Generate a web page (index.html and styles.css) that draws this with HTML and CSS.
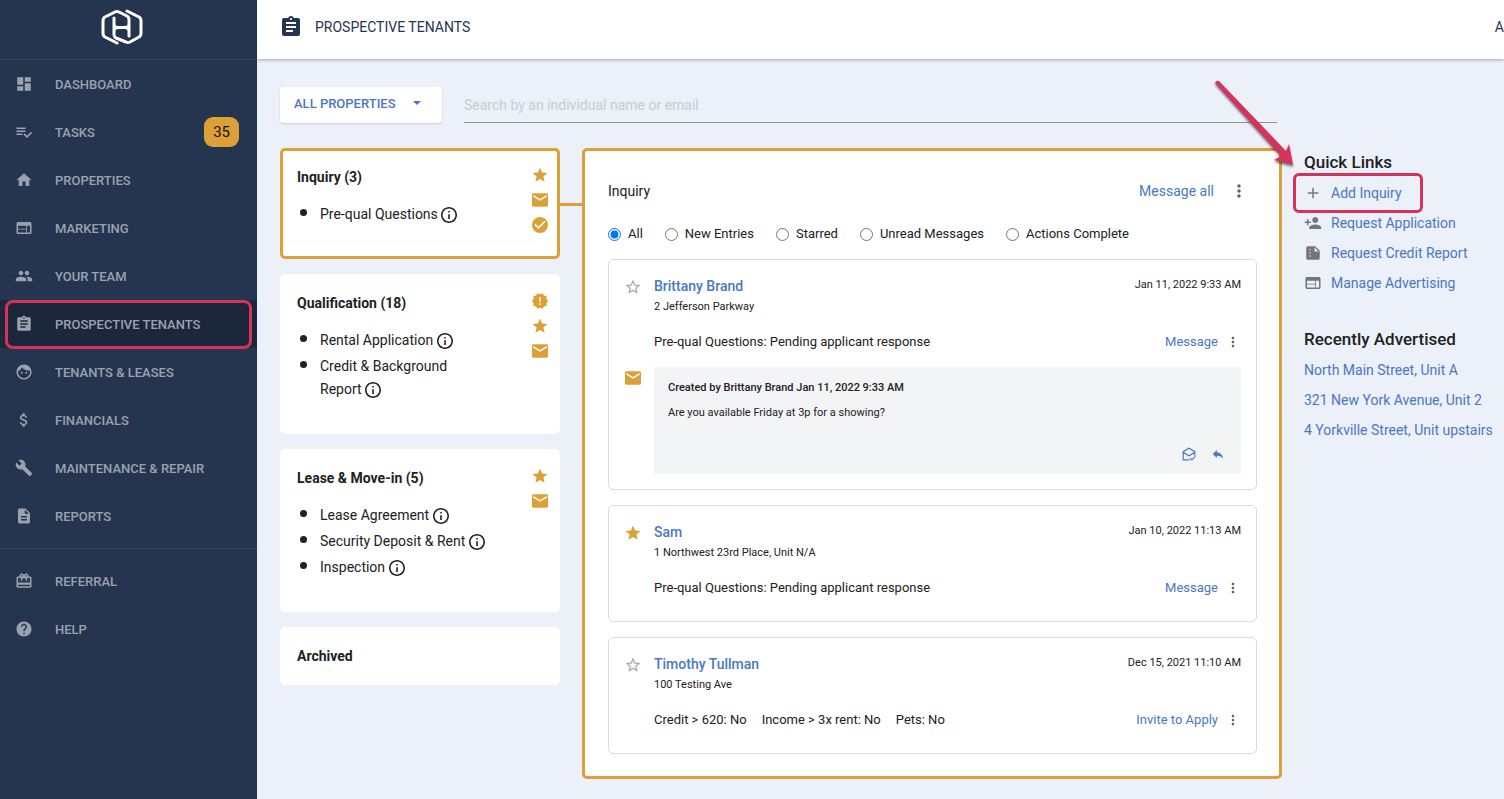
FILE: index.html
```html
<!DOCTYPE html>
<html lang="en">
<head>
  <meta charset="UTF-8">
  <meta name="viewport" content="width=device-width, initial-scale=1.0">
  <title>Prospective Tenants</title>
  <link rel="stylesheet" href="styles.css">
</head>
<body>
  <!-- Icon sprite -->
  <svg class="sprite" aria-hidden="true">
    <symbol id="i-dashboard" viewBox="0 0 24 24"><path d="M3 13h8V3H3v10zm0 8h8v-6H3v6zm10 0h8V11h-8v10zm0-18v6h8V3h-8z"/></symbol>
    <symbol id="i-tasks" viewBox="0 0 24 24"><path d="M14 10H2v2h12v-2zm0-4H2v2h12V6zM2 16h8v-2H2v2zm19.500-4.500L23 13l-7 7-4.500-4.500L13 14l3 3 5.500-5.500z"/></symbol>
    <symbol id="i-home" viewBox="0 0 24 24"><path d="M10 20v-6h4v6h5v-8h3L12 3 2 12h3v8z"/></symbol>
    <symbol id="i-web" viewBox="0 0 24 24"><path d="M20 4H4c-1.100 0-2 .9-2 2v12c0 1.100.9 2 2 2h16c1.100 0 2-.9 2-2V6c0-1.100-.9-2-2-2zm-5 14H4v-4h11v4zm0-5H4V9h11v4zm5 5h-4V9h4v9z"/></symbol>
    <symbol id="i-people" viewBox="0 0 24 24"><path d="M16 11c1.660 0 3-1.340 3-3s-1.340-3-3-3-3 1.340-3 3 1.340 3 3 3zm-8 0c1.660 0 3-1.340 3-3S9.660 5 8 5 5 6.340 5 8s1.340 3 3 3zm0 2c-2.330 0-7 1.170-7 3.500V19h14v-2.500C15 14.170 10.330 13 8 13zm8 0c-.29 0-.62.02-.97.05 1.160.84 1.970 1.970 1.970 3.450V19h6v-2.500c0-2.330-4.670-3.500-7-3.500z"/></symbol>
    <symbol id="i-assignment" viewBox="0 0 24 24"><path d="M19 3h-4.180C14.400 1.840 13.300 1 12 1s-2.400.84-2.820 2H5c-1.100 0-2 .9-2 2v14c0 1.100.9 2 2 2h14c1.100 0 2-.9 2-2V5c0-1.100-.9-2-2-2zm-7 0c.55 0 1 .45 1 1s-.45 1-1 1-1-.45-1-1 .45-1 1-1zm2 14H7v-2h7v2zm3-4H7v-2h10v2zm0-4H7V7h10v2z"/></symbol>
    <symbol id="i-face" viewBox="0 0 24 24"><path d="M9 11.750a1.250 1.250 0 1 0 0 2.500 1.250 1.250 0 0 0 0-2.500zm6 0a1.250 1.250 0 1 0 0 2.500 1.250 1.250 0 0 0 0-2.500zM12 2C6.480 2 2 6.480 2 12s4.480 10 10 10 10-4.480 10-10S17.520 2 12 2zm0 18c-4.410 0-8-3.590-8-8 0-.29.02-.58.05-.86 2.360-1.050 4.230-2.980 5.210-5.370C11.070 8.330 14.050 10 17.420 10c.78 0 1.530-.09 2.250-.26.21.71.33 1.470.33 2.260 0 4.410-3.590 8-8 8z"/></symbol>
    <symbol id="i-money" viewBox="0 0 24 24"><path d="M11.800 10.900c-2.270-.59-3-1.200-3-2.150 0-1.090 1.010-1.850 2.700-1.850 1.780 0 2.440.85 2.500 2.100h2.210c-.07-1.720-1.120-3.300-3.210-3.810V3h-3v2.160c-1.940.42-3.500 1.680-3.500 3.610 0 2.310 1.910 3.460 4.700 4.130 2.500.6 3 1.480 3 2.410 0 .69-.49 1.790-2.700 1.790-2.060 0-2.870-.92-2.980-2.100h-2.200c.12 2.190 1.760 3.420 3.680 3.830V21h3v-2.150c1.950-.37 3.500-1.500 3.500-3.550 0-2.840-2.430-3.810-4.700-4.400z"/></symbol>
    <symbol id="i-build" viewBox="0 0 24 24"><path d="M22.700 19l-9.100-9.100c.9-2.300.4-5-1.500-6.900-2-2-5-2.400-7.400-1.300L9 6 6 9 1.600 4.700C.4 7.100.9 10.100 2.900 12.100c1.900 1.900 4.600 2.400 6.900 1.500l9.100 9.100c.4.4 1 .4 1.400 0l2.300-2.300c.5-.4.5-1.100.1-1.400z"/></symbol>
    <symbol id="i-description" viewBox="0 0 24 24"><path d="M14 2H6c-1.100 0-2 .9-2 2v16c0 1.100.9 2 2 2h12c1.100 0 2-.9 2-2V8l-6-6zm2 16H8v-2h8v2zm0-4H8v-2h8v2zm-3-5V3.500L18.500 9H13z"/></symbol>
    <symbol id="i-gift" viewBox="0 0 24 24"><path d="M20 6h-2.180c.11-.31.18-.65.18-1 0-1.660-1.340-3-3-3-1.050 0-1.960.54-2.500 1.350l-.5.67-.5-.68C10.960 2.540 10.050 2 9 2 7.340 2 6 3.340 6 5c0 .35.07.69.18 1H4c-1.110 0-1.990.89-1.990 2L2 19c0 1.110.89 2 2 2h16c1.110 0 2-.89 2-2V8c0-1.110-.89-2-2-2zm-5-2c.55 0 1 .45 1 1s-.45 1-1 1-1-.45-1-1 .45-1 1-1zM9 4c.55 0 1 .45 1 1s-.45 1-1 1-1-.45-1-1 .45-1 1-1zm11 15H4v-2h16v2zm0-5H4V8h5.080L7 10.830 8.620 12 11 8.760l1-1.360 1 1.360L15.380 12 17 10.830 14.920 8H20v6z"/></symbol>
    <symbol id="i-help" viewBox="0 0 24 24"><path d="M12 2C6.480 2 2 6.480 2 12s4.480 10 10 10 10-4.480 10-10S17.520 2 12 2zm1 17h-2v-2h2v2zm2.070-7.750l-.9.92C13.450 12.900 13 13.500 13 15h-2v-.5c0-1.100.45-2.100 1.170-2.830l1.240-1.260c.37-.36.59-.86.59-1.410 0-1.100-.9-2-2-2s-2 .9-2 2H8c0-2.210 1.790-4 4-4s4 1.790 4 4c0 .88-.36 1.680-.93 2.250z"/></symbol>
    <symbol id="i-star" viewBox="0 0 24 24"><path d="M12 17.270L18.180 21l-1.640-7.030L22 9.240l-7.190-.61L12 2 9.190 8.630 2 9.240l5.460 4.730L5.820 21z"/></symbol>
    <symbol id="i-star-border" viewBox="0 0 24 24"><path d="M22 9.240l-7.190-.62L12 2 9.190 8.630 2 9.240l5.460 4.730L5.820 21 12 17.270 18.180 21l-1.630-7.030L22 9.240zM12 15.400l-3.760 2.270 1-4.280-3.320-2.880 4.380-.38L12 6.100l1.710 4.040 4.380.38-3.320 2.880 1 4.280L12 15.400z"/></symbol>
    <symbol id="i-email" viewBox="-1.500 -1.500 27 27"><path d="M22 2H2C.9 2 0 2.900 0 4v16c0 1.100.9 2 2 2h20c1.100 0 2-.9 2-2V4c0-1.100-.9-2-2-2zm0 5l-10 6L2 7V4.500l10 6 10-6V7z"/></symbol>
    <symbol id="i-check" viewBox="-1.500 -1.500 27 27"><path d="M12 0a12 12 0 1 0 0 24 12 12 0 0 0 0-24zm-2.400 18l-6-6 1.700-1.700 4.300 4.300 9.100-9.100L20.400 7.200z"/></symbol>
    <symbol id="i-alert" viewBox="0 0 24 24"><path d="M23 12l-2.440-2.780.34-3.680-3.610-.82-1.890-3.180L12 3 8.600 1.540 6.710 4.720l-3.610.81.34 3.680L1 12l2.440 2.780-.34 3.690 3.610.82 1.890 3.180L12 21l3.400 1.460 1.890-3.180 3.610-.82-.34-3.680L23 12zm-10 5h-2v-2h2v2zm0-4h-2V7h2v6z"/></symbol>
    <symbol id="i-info" viewBox="2 2 20 20"><path d="M11 17h2v-6h-2v6zm1-15C6.480 2 2 6.480 2 12s4.480 10 10 10 10-4.480 10-10S17.520 2 12 2zm0 18c-4.410 0-8-3.590-8-8s3.590-8 8-8 8 3.590 8 8-3.590 8-8 8zM11 9h2V7h-2v2z"/></symbol>
    <symbol id="i-more" viewBox="0 0 24 24"><path d="M12 8c1.100 0 2-.9 2-2s-.9-2-2-2-2 .9-2 2 .9 2 2 2zm0 2c-1.100 0-2 .9-2 2s.9 2 2 2 2-.9 2-2-.9-2-2-2zm0 6c-1.100 0-2 .9-2 2s.9 2 2 2 2-.9 2-2-.9-2-2-2z"/></symbol>
    <symbol id="i-add" viewBox="0 0 24 24"><path d="M19 13h-6v6h-2v-6H5v-2h6V5h2v6h6v2z"/></symbol>
    <symbol id="i-person-add" viewBox="0 0 24 24"><path d="M15 12c2.210 0 4-1.790 4-4s-1.790-4-4-4-4 1.790-4 4 1.790 4 4 4zm-9-2V7H4v3H1v2h3v3h2v-3h3v-2H6zm9 4c-2.670 0-8 1.340-8 4v2h16v-2c0-2.660-5.330-4-8-4z"/></symbol>
    <symbol id="i-report" viewBox="0 0 24 24"><path d="M15 3H5c-1.100 0-2 .9-2 2v14c0 1.100.9 2 2 2h14c1.100 0 2-.9 2-2V9l-6-6zM8 17c-.55 0-1-.45-1-1s.45-1 1-1 1 .45 1 1-.45 1-1 1zm0-4c-.55 0-1-.45-1-1s.45-1 1-1 1 .45 1 1-.45 1-1 1zm0-4c-.55 0-1-.45-1-1s.45-1 1-1 1 .45 1 1-.45 1-1 1zm6 1V4.500l5.500 5.500H14z"/></symbol>
    <symbol id="i-mail-read" viewBox="0 0 24 24"><path fill="none" stroke="currentColor" stroke-width="2" d="M13 22H2V8l10-6 10 6v7M2 9l10 6 10-6M14 19l3 3 6-6"/></symbol>
    <symbol id="i-reply" viewBox="0 0 24 24"><path d="M10 9V5l-7 7 7 7v-4.100c5 0 8.500 1.600 11 5.100-1-5-4-10-11-11z"/></symbol>
    <symbol id="i-caret" viewBox="0 0 24 24"><path d="M6 9l6 6 6-6z"/></symbol>
  </svg>

  <div class="app">
    <!-- Sidebar -->
    <aside class="sidebar">
      <a class="brand" href="#" aria-label="Home">
        <svg class="brand-logo" viewBox="0 0 42 36" fill="none" stroke="currentColor" stroke-width="3" stroke-linecap="round" stroke-linejoin="round">
          <path d="M16 34L4 28Q2 27 2 24V12Q2 9 4 8L14 3Q16 2 18 3L26 7Q28 8 28 11V27M13 9V25Q13 28 15 29L25 33Q27 34 29 33L38 28Q40 27 40 24V12Q40 9 38 8L26 2M13 16Q14 18.500 17 18.500H24Q27 18.500 28 16M13 21Q14 18.500 17 18.500M28 21Q27 18.500 24 18.500"/>
        </svg>
      </a>
      <nav>
        <ul class="nav-list">
          <li><a class="nav-link" href="#"><svg class="icon"><use href="#i-dashboard"/></svg>DASHBOARD</a></li>
          <li><a class="nav-link" href="#"><svg class="icon"><use href="#i-tasks"/></svg>TASKS<span class="nav-badge">35</span></a></li>
          <li><a class="nav-link" href="#"><svg class="icon"><use href="#i-home"/></svg>PROPERTIES</a></li>
          <li><a class="nav-link" href="#"><svg class="icon"><use href="#i-web"/></svg>MARKETING</a></li>
          <li><a class="nav-link" href="#"><svg class="icon"><use href="#i-people"/></svg>YOUR TEAM</a></li>
          <li><a class="nav-link active" href="#"><svg class="icon"><use href="#i-assignment"/></svg>PROSPECTIVE TENANTS</a></li>
          <li><a class="nav-link" href="#"><svg class="icon"><use href="#i-face"/></svg>TENANTS &amp; LEASES</a></li>
          <li><a class="nav-link" href="#"><svg class="icon"><use href="#i-money"/></svg>FINANCIALS</a></li>
          <li><a class="nav-link" href="#"><svg class="icon"><use href="#i-build"/></svg>MAINTENANCE &amp; REPAIR</a></li>
          <li><a class="nav-link" href="#"><svg class="icon"><use href="#i-description"/></svg>REPORTS</a></li>
        </ul>
        <ul class="nav-list nav-secondary">
          <li><a class="nav-link" href="#"><svg class="icon"><use href="#i-gift"/></svg>REFERRAL</a></li>
          <li><a class="nav-link" href="#"><svg class="icon"><use href="#i-help"/></svg>HELP</a></li>
        </ul>
      </nav>
    </aside>

    <div class="page">
      <header class="topbar">
        <svg class="topbar-icon"><use href="#i-assignment"/></svg>
        <h1 class="topbar-title">PROSPECTIVE TENANTS</h1>
        <span class="topbar-account">A</span>
      </header>

      <main class="content">
        <div class="toolbar">
          <div class="property-filter">
            <select class="property-select" aria-label="Properties">
              <option>ALL PROPERTIES</option>
            </select>
            <svg class="property-caret"><use href="#i-caret"/></svg>
          </div>
          <input class="search" type="text" placeholder="Search by an individual name or email" aria-label="Search">
        </div>

        <div class="board">
          <!-- Stages -->
          <div class="stages">
            <section class="stage selected">
              <div class="stage-body">
                <h2 class="stage-title">Inquiry (3)</h2>
                <ul class="stage-list">
                  <li><span>Pre-qual Questions&nbsp;<svg class="info"><use href="#i-info"/></svg></span></li>
                </ul>
              </div>
              <div class="stage-icons">
                <svg class="icon"><use href="#i-star"/></svg>
                <svg class="icon"><use href="#i-email"/></svg>
                <svg class="icon"><use href="#i-check"/></svg>
              </div>
            </section>

            <section class="stage">
              <div class="stage-body">
                <h2 class="stage-title">Qualification (18)</h2>
                <ul class="stage-list">
                  <li><span>Rental Application&nbsp;<svg class="info"><use href="#i-info"/></svg></span></li>
                  <li><span>Credit &amp; Background Report&nbsp;<svg class="info"><use href="#i-info"/></svg></span></li>
                </ul>
              </div>
              <div class="stage-icons">
                <svg class="icon"><use href="#i-alert"/></svg>
                <svg class="icon"><use href="#i-star"/></svg>
                <svg class="icon"><use href="#i-email"/></svg>
              </div>
            </section>

            <section class="stage">
              <div class="stage-body">
                <h2 class="stage-title">Lease &amp; Move-in (5)</h2>
                <ul class="stage-list">
                  <li><span>Lease Agreement&nbsp;<svg class="info"><use href="#i-info"/></svg></span></li>
                  <li><span>Security Deposit &amp; Rent&nbsp;<svg class="info"><use href="#i-info"/></svg></span></li>
                  <li><span>Inspection&nbsp;<svg class="info"><use href="#i-info"/></svg></span></li>
                </ul>
              </div>
              <div class="stage-icons">
                <svg class="icon"><use href="#i-star"/></svg>
                <svg class="icon"><use href="#i-email"/></svg>
              </div>
            </section>

            <section class="stage compact">
              <div class="stage-body">
                <h2 class="stage-title">Archived</h2>
              </div>
            </section>
          </div>

          <!-- Inquiry panel -->
          <section class="panel">
            <div class="panel-head">
              <h2 class="panel-title">Inquiry</h2>
              <a class="panel-action" href="#">Message all</a>
              <button class="icon-button large" type="button" aria-label="More"><svg><use href="#i-more"/></svg></button>
            </div>

            <div class="filters">
              <label class="filter"><input type="radio" name="filter" checked>All</label>
              <label class="filter"><input type="radio" name="filter">New Entries</label>
              <label class="filter"><input type="radio" name="filter">Starred</label>
              <label class="filter"><input type="radio" name="filter">Unread Messages</label>
              <label class="filter"><input type="radio" name="filter">Actions Complete</label>
            </div>

            <div class="entries">
              <article class="entry">
                <button class="star-button" type="button" aria-label="Star"><svg class="icon"><use href="#i-star-border"/></svg></button>
                <div class="entry-head">
                  <div>
                    <a class="entry-name" href="#">Brittany Brand</a>
                    <p class="entry-address">2 Jefferson Parkway</p>
                  </div>
                  <span class="entry-date">Jan 11, 2022 9:33 AM</span>
                </div>
                <div class="entry-detail">
                  <span>Pre-qual Questions: Pending applicant response</span>
                  <a class="entry-action" href="#">Message</a>
                  <button class="icon-button" type="button" aria-label="More"><svg><use href="#i-more"/></svg></button>
                </div>
                <svg class="icon note-icon"><use href="#i-email"/></svg>
                <div class="note">
                  <p class="note-meta">Created by Brittany Brand Jan 11, 2022 9:33 AM</p>
                  <p class="note-text">Are you available Friday at 3p for a showing?</p>
                  <div class="note-actions">
                    <button class="icon-button small" type="button" aria-label="Mark as read"><svg><use href="#i-mail-read"/></svg></button>
                    <button class="icon-button small" type="button" aria-label="Reply"><svg><use href="#i-reply"/></svg></button>
                  </div>
                </div>
              </article>

              <article class="entry">
                <button class="star-button on" type="button" aria-label="Unstar"><svg class="icon"><use href="#i-star"/></svg></button>
                <div class="entry-head">
                  <div>
                    <a class="entry-name" href="#">Sam</a>
                    <p class="entry-address">1 Northwest 23rd Place, Unit N/A</p>
                  </div>
                  <span class="entry-date">Jan 10, 2022 11:13 AM</span>
                </div>
                <div class="entry-detail">
                  <span>Pre-qual Questions: Pending applicant response</span>
                  <a class="entry-action" href="#">Message</a>
                  <button class="icon-button" type="button" aria-label="More"><svg><use href="#i-more"/></svg></button>
                </div>
              </article>

              <article class="entry">
                <button class="star-button" type="button" aria-label="Star"><svg class="icon"><use href="#i-star-border"/></svg></button>
                <div class="entry-head">
                  <div>
                    <a class="entry-name" href="#">Timothy Tullman</a>
                    <p class="entry-address">100 Testing Ave</p>
                  </div>
                  <span class="entry-date">Dec 15, 2021 11:10 AM</span>
                </div>
                <div class="entry-detail">
                  <span>Credit &gt; 620: No</span>
                  <span>Income &gt; 3x rent: No</span>
                  <span>Pets: No</span>
                  <a class="entry-action" href="#">Invite to Apply</a>
                  <button class="icon-button" type="button" aria-label="More"><svg><use href="#i-more"/></svg></button>
                </div>
              </article>
            </div>
          </section>

          <!-- Quick links -->
          <aside class="links">
            <h2 class="links-title">Quick Links</h2>
            <ul class="links-list">
              <li class="highlight"><a href="#"><svg class="icon"><use href="#i-add"/></svg>Add Inquiry</a></li>
              <li><a href="#"><svg class="icon"><use href="#i-person-add"/></svg>Request Application</a></li>
              <li><a href="#"><svg class="icon"><use href="#i-report"/></svg>Request Credit Report</a></li>
              <li><a href="#"><svg class="icon"><use href="#i-web"/></svg>Manage Advertising</a></li>
            </ul>
            <h2 class="links-title">Recently Advertised</h2>
            <ul class="links-list">
              <li><a href="#">North Main Street, Unit A</a></li>
              <li><a href="#">321 New York Avenue, Unit 2</a></li>
              <li><a href="#">4 Yorkville Street, Unit upstairs</a></li>
            </ul>
            <svg class="pointer" viewBox="0 0 84 92" aria-hidden="true">
              <path d="M2 5Q3 2 6 3L73 73L76 66L80 87L61 82L68 78Z"/>
            </svg>
          </aside>
        </div>
      </main>
    </div>
  </div>
</body>
</html>
```
FILE: styles.css
```css
* {
  box-sizing: border-box;
}

body {
  margin: 0;
  font-family: Roboto, "Liberation Sans", sans-serif;
  font-size: 14px;
  color: #212121;
  background: #ebf0f9;
  overflow-x: hidden;
}

h1, h2, p, ul {
  margin: 0;
  padding: 0;
}

ul {
  list-style: none;
}

a {
  color: #4a77c4;
  text-decoration: none;
}

button {
  padding: 0;
  border: none;
  background: none;
  cursor: pointer;
}

svg {
  display: block;
  fill: currentColor;
}

.sprite {
  display: none;
}

.icon {
  width: 18px;
  height: 18px;
  flex: none;
}

.app {
  display: flex;
  min-height: 100vh;
}

/* Sidebar */
.sidebar {
  width: 257px;
  flex: none;
  background: #253550;
}

.brand {
  display: flex;
  justify-content: center;
  align-items: center;
  height: 60px;
  padding: 0 14px 6px 0;
  border-bottom: 1px solid #31425f;
  color: #fff;
}

.brand-logo {
  width: 42px;
  height: 36px;
  fill: none;
}

.nav-link {
  display: flex;
  align-items: center;
  gap: 22px;
  height: 48px;
  padding: 0 18px 0 15px;
  font-size: 13px;
  font-weight: 500;
  color: #9ba2af;
}

.nav-link.active {
  position: relative;
  background: #1d273b;
}

.nav-link.active::after {
  content: '';
  position: absolute;
  inset: 0 5px -1px;
  border: 3px solid #d6335c;
  border-radius: 8px;
}

.nav-badge {
  margin-left: auto;
  padding: 0 9px;
  border-radius: 9px;
  background: #dda037;
  font-size: 15px;
  font-weight: 400;
  line-height: 30px;
  color: #111;
}

.nav-secondary {
  margin-top: 8px;
  padding-top: 8px;
  border-top: 1px solid #31425f;
}

/* Top bar */
.page {
  flex: 1;
  min-width: 0;
}

.topbar {
  display: flex;
  align-items: center;
  height: 59px;
  padding: 0 0 6px 22px;
  background: #fff;
  box-shadow: 0 1px 3px rgba(0, 0, 0, 0.3);
  color: #253550;
}

.topbar-icon {
  width: 24px;
  height: 24px;
}

.topbar-title {
  margin-left: 12px;
  font-size: 14px;
  font-weight: 400;
}

.topbar-account {
  margin-left: auto;
}

/* Toolbar */
.content {
  padding: 28px 0 21px 23px;
}

.toolbar {
  display: flex;
  gap: 22px;
  margin: 0 227px 25px 0;
}

.property-filter {
  position: relative;
  width: 162px;
}

.property-select {
  appearance: none;
  width: 100%;
  height: 36px;
  padding: 0 14px 4px;
  border: none;
  border-radius: 3px;
  background: #fff;
  box-shadow: 0 1px 2px rgba(0, 0, 0, 0.15);
  font-family: inherit;
  font-size: 13px;
  font-weight: 500;
  color: #4a77c4;
}

.property-caret {
  position: absolute;
  top: 8px;
  right: 17px;
  width: 16px;
  height: 16px;
  color: #4a77c4;
  pointer-events: none;
}

.search {
  flex: 1;
  height: 36px;
  padding: 0;
  border: none;
  border-bottom: 1px solid #949494;
  background: none;
  font-family: inherit;
  font-size: 14px;
}

.search::placeholder {
  color: #c9cbcf;
}

/* Board */
.board {
  display: grid;
  grid-template-columns: 280px minmax(0, 1fr) 200px;
  gap: 22px;
  align-items: start;
}

.stages {
  display: grid;
  gap: 15px;
}

.stage {
  position: relative;
  display: flex;
  justify-content: space-between;
  padding: 15px 8px 0 14px;
  border: 3px solid #fff;
  border-radius: 5px;
  background: #fff;
}

.stage.selected {
  border-color: #dda037;
}

/* line that joins the selected stage to the panel */
.stage.selected::after {
  content: '';
  position: absolute;
  top: 52px;
  left: 100%;
  width: 26px;
  height: 3px;
  background: #dda037;
}

.stage-body {
  width: 190px;
  padding-bottom: 30px;
}

.stage.compact .stage-body {
  padding-bottom: 14px;
}

.stage-title {
  font-size: 14px;
  font-weight: 700;
  line-height: 23px;
}

.stage-list {
  display: grid;
  gap: 3px;
  margin-top: 14px;
  padding-left: 3px;
}

.stage-list li {
  display: flex;
  gap: 13px;
  line-height: 23px;
}

.stage-list li::before {
  content: '';
  flex: none;
  width: 7px;
  height: 7px;
  margin-top: 6px;
  border-radius: 50%;
  background: #212121;
}

.info {
  display: inline-block;
  width: 16px;
  height: 16px;
  vertical-align: -4px;
}

.stage-icons {
  display: grid;
  gap: 7px;
  align-content: start;
  color: #dda037;
}

/* Panel */
.panel {
  padding: 26px 22px 22px 23px;
  border: 3px solid #dda037;
  border-radius: 5px;
  background: #fff;
}

.panel-head {
  display: flex;
  align-items: center;
  gap: 15px;
  padding-right: 8px;
  line-height: 28px;
}

.panel-title {
  font-size: 14px;
  font-weight: 400;
}

.panel-action {
  margin-left: auto;
}

.icon-button {
  color: #616161;
}

.icon-button svg {
  width: 16px;
  height: 16px;
}

.icon-button.small svg {
  width: 14px;
  height: 14px;
}

.icon-button.large svg {
  width: 20px;
  height: 20px;
}

.filters {
  display: flex;
  flex-wrap: wrap;
  gap: 22px;
  margin: 19px 0 15px;
}

.filter {
  display: flex;
  align-items: center;
  gap: 7px;
  font-size: 13px;
  line-height: 20px;
}

.filter input {
  width: 13px;
  height: 13px;
  margin: 0;
}

.entries {
  display: grid;
  gap: 15px;
}

.entry {
  display: grid;
  grid-template-columns: 18px minmax(0, 1fr);
  column-gap: 12px;
  align-items: start;
  padding: 15px;
  border: 1px solid #dcdcdc;
  border-radius: 5px;
}

.star-button {
  margin-top: 3px;
  color: #a5a5a5;
}

.star-button.on {
  color: #dda037;
}

.entry-head {
  display: flex;
  justify-content: space-between;
}

.entry-name {
  display: block;
  font-weight: 500;
  line-height: 22px;
}

.entry-address,
.entry-date {
  font-size: 11px;
  line-height: 20px;
}

.entry-detail {
  grid-column: 2;
  display: flex;
  align-items: center;
  gap: 15px;
  margin: 15px 0 8px;
  font-size: 13px;
  line-height: 20px;
}

.entry-action {
  margin-left: auto;
}

.entry-detail .icon-button {
  margin-left: -8px;
}

.note-icon {
  margin-top: 9px;
  color: #dda037;
}

.note {
  margin-top: 7px;
  padding: 11px 14px;
  background: #f3f4f6;
  font-size: 11px;
  line-height: 20px;
}

.note-meta {
  font-weight: 500;
}

.note-text {
  margin-top: 5px;
}

.note-actions {
  display: flex;
  justify-content: flex-end;
  gap: 15px;
  padding: 24px 2px 2px;
}

.note-actions .icon-button {
  color: #4a77c4;
}

/* Quick links */
.links {
  position: relative;
}

.links-title {
  font-size: 17px;
  font-weight: 500;
  line-height: 28px;
}

.links-list {
  padding: 2px 0 27px;
}

.links-list a {
  display: flex;
  align-items: center;
  gap: 9px;
  line-height: 30px;
  white-space: nowrap;
}

.links-list .icon {
  color: #757575;
}

.highlight {
  position: relative;
}

.highlight::after {
  content: '';
  position: absolute;
  inset: -5px 81px -5px -11px;
  border: 3px solid #d6335c;
  border-radius: 6px;
}

.pointer {
  position: absolute;
  top: -70px;
  left: -91px;
  width: 84px;
  height: 92px;
  fill: #d6335c;
  filter: drop-shadow(0 2px 1px rgba(0, 0, 0, 0.5));
}
```
